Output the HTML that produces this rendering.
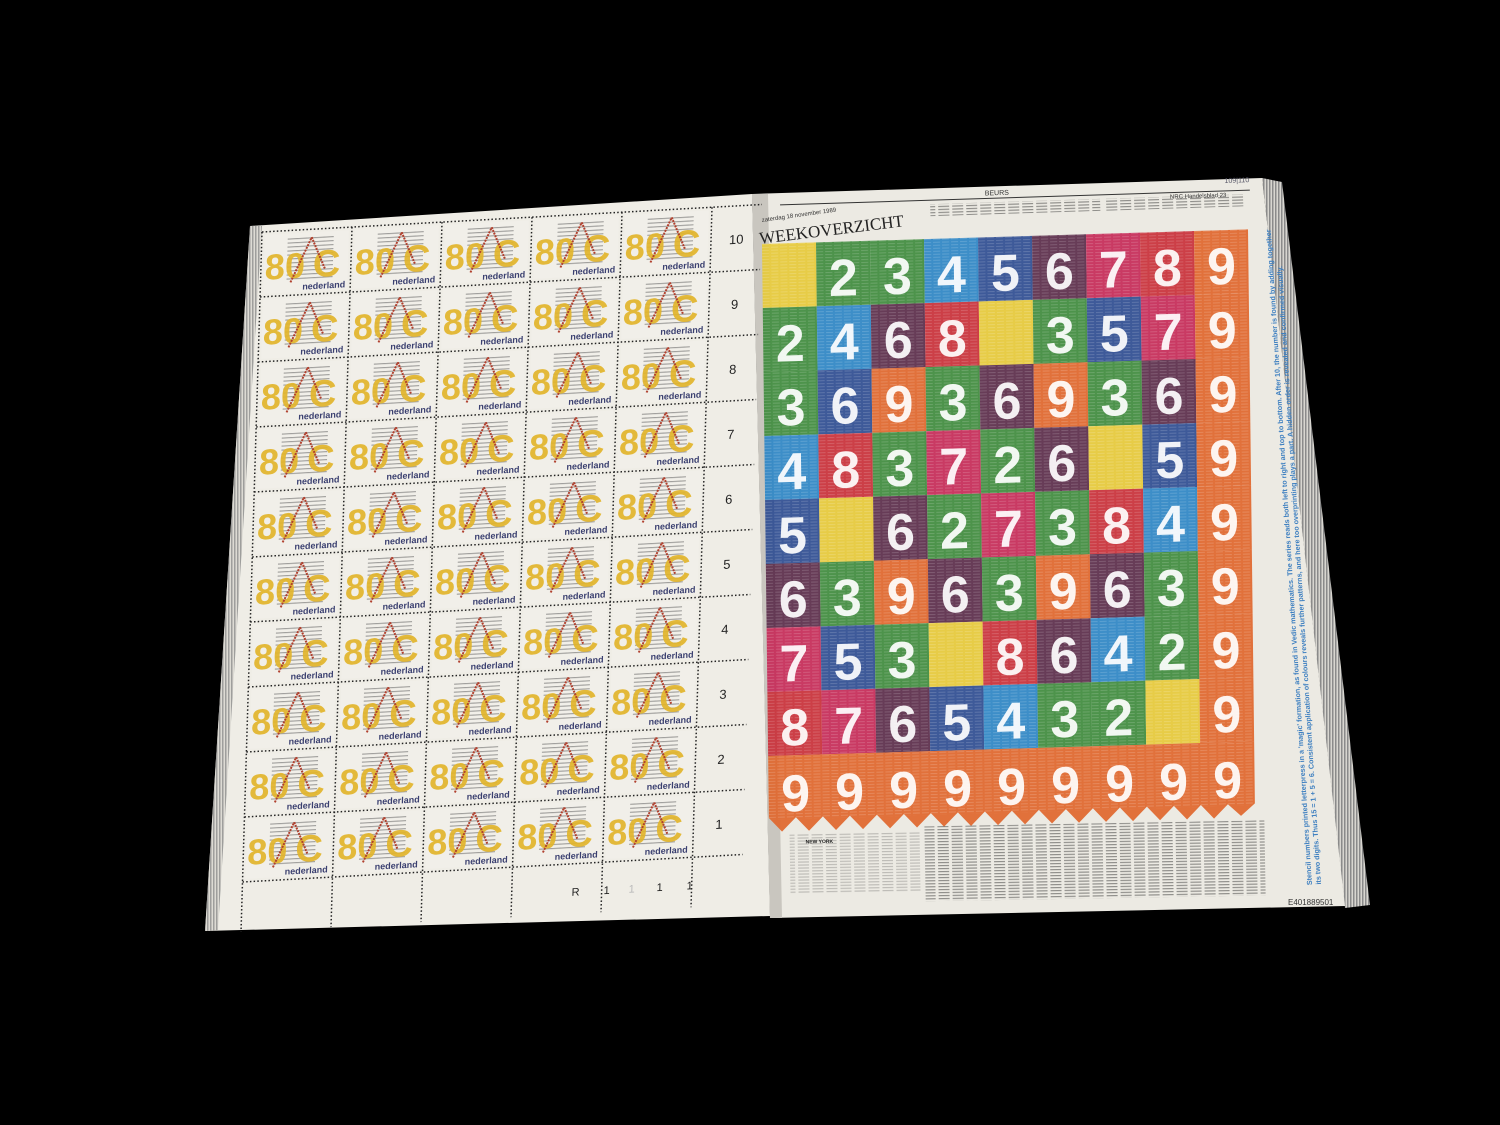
<!DOCTYPE html>
<html><head><meta charset="utf-8"><style>html,body{margin:0;padding:0;background:#000;}svg{display:block}</style></head>
<body>
<svg width="1500" height="1125" viewBox="0 0 1500 1125" xmlns="http://www.w3.org/2000/svg" font-family="Liberation Sans, sans-serif">
<defs>
<pattern id="ln" width="6" height="4" patternUnits="userSpaceOnUse"><rect width="6" height="1.1" fill="#666"/></pattern>
<pattern id="np" width="9" height="3" patternUnits="userSpaceOnUse"><rect width="7" height="1" fill="#fff" opacity="0.18"/></pattern>
<pattern id="np2" width="14" height="3" patternUnits="userSpaceOnUse"><rect width="11" height="1.2" fill="#333" opacity="0.5"/></pattern>
<pattern id="edge" width="3" height="4" patternUnits="userSpaceOnUse"><rect width="3" height="4" fill="#d8d6d0"/><rect width="1.5" height="4" fill="#8a8a8a"/></pattern>
<g id="st">
<rect x="3" y="3" width="84" height="59" fill="#f1efe9"/>
<rect x="26" y="7" width="46" height="44" fill="url(#ln)" opacity="0.6"/>
<text x="4" y="48" font-size="36" font-weight="bold" fill="#e2b52c" opacity="0.92">80</text>
<text x="52" y="48" font-size="38" font-weight="bold" fill="#e2b52c" opacity="0.92">C</text>
<line x1="30" y1="52" x2="50" y2="8" stroke="#b0402e" stroke-width="2" stroke-dasharray="2 1"/>
<line x1="50" y1="8" x2="64" y2="40" stroke="#b0402e" stroke-width="2" stroke-dasharray="2 1"/>
<text x="42" y="60" font-size="9" font-weight="bold" fill="#3b4070">nederland</text>
</g>
</defs>
<rect width="1500" height="1125" fill="#000"/>
<polygon points="1262,178 1282,182 1370,905 1345,908" fill="url(#edge)"/>
<polygon points="250,226 752,194 770,916 205,931" fill="#efede6"/>
<polygon points="250,226 262,226 218,930 205,931" fill="url(#edge)" opacity="0.8"/>
<polygon points="752,194 1262,178 1345,906 770,918" fill="#eceae3"/>
<polygon points="752,194 768,194 782,918 770,918" fill="#c9c6bf"/>
<g transform="matrix(1,-0.055,-0.03,1,262,232)">
<g stroke="#222" stroke-width="1.5" stroke-dasharray="1.5 2.2">
<line x1="0" y1="0" x2="0" y2="700"/><line x1="90" y1="0" x2="90" y2="700"/><line x1="180" y1="0" x2="180" y2="700"/><line x1="270" y1="0" x2="270" y2="700"/><line x1="360" y1="0" x2="360" y2="700"/><line x1="450" y1="0" x2="450" y2="700"/>
<line x1="0" y1="0" x2="500" y2="0"/><line x1="0" y1="65" x2="500" y2="65"/><line x1="0" y1="130" x2="500" y2="130"/><line x1="0" y1="195" x2="500" y2="195"/><line x1="0" y1="260" x2="500" y2="260"/><line x1="0" y1="325" x2="500" y2="325"/><line x1="0" y1="390" x2="500" y2="390"/><line x1="0" y1="455" x2="500" y2="455"/><line x1="0" y1="520" x2="500" y2="520"/><line x1="0" y1="585" x2="500" y2="585"/><line x1="0" y1="650" x2="500" y2="650"/>
</g>
<use href="#st" x="0" y="0"/><use href="#st" x="90" y="0"/><use href="#st" x="180" y="0"/><use href="#st" x="270" y="0"/><use href="#st" x="360" y="0"/>
<use href="#st" x="0" y="65"/><use href="#st" x="90" y="65"/><use href="#st" x="180" y="65"/><use href="#st" x="270" y="65"/><use href="#st" x="360" y="65"/>
<use href="#st" x="0" y="130"/><use href="#st" x="90" y="130"/><use href="#st" x="180" y="130"/><use href="#st" x="270" y="130"/><use href="#st" x="360" y="130"/>
<use href="#st" x="0" y="195"/><use href="#st" x="90" y="195"/><use href="#st" x="180" y="195"/><use href="#st" x="270" y="195"/><use href="#st" x="360" y="195"/>
<use href="#st" x="0" y="260"/><use href="#st" x="90" y="260"/><use href="#st" x="180" y="260"/><use href="#st" x="270" y="260"/><use href="#st" x="360" y="260"/>
<use href="#st" x="0" y="325"/><use href="#st" x="90" y="325"/><use href="#st" x="180" y="325"/><use href="#st" x="270" y="325"/><use href="#st" x="360" y="325"/>
<use href="#st" x="0" y="390"/><use href="#st" x="90" y="390"/><use href="#st" x="180" y="390"/><use href="#st" x="270" y="390"/><use href="#st" x="360" y="390"/>
<use href="#st" x="0" y="455"/><use href="#st" x="90" y="455"/><use href="#st" x="180" y="455"/><use href="#st" x="270" y="455"/><use href="#st" x="360" y="455"/>
<use href="#st" x="0" y="520"/><use href="#st" x="90" y="520"/><use href="#st" x="180" y="520"/><use href="#st" x="270" y="520"/><use href="#st" x="360" y="520"/>
<use href="#st" x="0" y="585"/><use href="#st" x="90" y="585"/><use href="#st" x="180" y="585"/><use href="#st" x="270" y="585"/><use href="#st" x="360" y="585"/>
<g font-size="13" fill="#222">
<text x="468" y="38">10</text><text x="472" y="103">9</text><text x="472" y="168">8</text><text x="472" y="233">7</text><text x="472" y="298">6</text><text x="472" y="363">5</text><text x="472" y="428">4</text><text x="472" y="493">3</text><text x="472" y="558">2</text><text x="472" y="623">1</text>
<text x="330" y="682" font-size="11">R</text><text x="362" y="682" font-size="11">1</text><text x="387" y="682" font-size="11" fill="#bbb">1</text><text x="415" y="682" font-size="11">1</text><text x="445" y="682" font-size="11">1</text>
</g>
</g>
<g transform="rotate(-1.8 1000 200)">
<line x1="780" y1="198" x2="1250" y2="198" stroke="#333" stroke-width="1"/>
<text x="985" y="195" font-size="7" fill="#333">BEURS</text>
<text x="1170" y="204" font-size="6" fill="#333">NRC Handelsblad 23</text>
<text x="1225" y="190" font-size="7" fill="#556">109|110</text>
<rect x="930" y="202" width="170" height="12" fill="url(#np2)"/>
<rect x="1105" y="202" width="140" height="12" fill="url(#np2)"/>
</g>
<text x="762" y="222" font-size="6" fill="#333" transform="rotate(-8 762 222)">zaterdag 18 november 1989</text>
<text x="760" y="244" font-size="17" font-family="Liberation Serif, serif" fill="#222" transform="rotate(-7 760 244)">WEEKOVERZICHT</text>
<g transform="matrix(1,-0.03,0.012,1,762,244)" font-size="52" font-weight="bold" text-anchor="middle" fill="#fff" fill-opacity="0.92">
<g>
<rect x="0" y="0" width="54" height="64" fill="#e6c93a"/><rect x="54" y="0" width="54" height="64" fill="#3f8b3e"/><rect x="108" y="0" width="54" height="64" fill="#3f8b3e"/><rect x="162" y="0" width="54" height="64" fill="#2e86c6"/><rect x="216" y="0" width="54" height="64" fill="#2f4d92"/><rect x="270" y="0" width="54" height="64" fill="#5b2d4b"/><rect x="324" y="0" width="54" height="64" fill="#c52a58"/><rect x="378" y="0" width="54" height="64" fill="#c9303a"/><rect x="432" y="0" width="54" height="64" fill="#e0662c"/>
<text x="81" y="54">2</text><text x="135" y="54">3</text><text x="189" y="54">4</text><text x="243" y="54">5</text><text x="297" y="54">6</text><text x="351" y="54">7</text><text x="405" y="54">8</text><text x="459" y="54">9</text>
</g>
<g transform="translate(0,64)">
<rect x="0" y="0" width="54" height="64" fill="#3f8b3e"/><rect x="54" y="0" width="54" height="64" fill="#2e86c6"/><rect x="108" y="0" width="54" height="64" fill="#5b2d4b"/><rect x="162" y="0" width="54" height="64" fill="#c9303a"/><rect x="216" y="0" width="54" height="64" fill="#e6c93a"/><rect x="270" y="0" width="54" height="64" fill="#3f8b3e"/><rect x="324" y="0" width="54" height="64" fill="#2f4d92"/><rect x="378" y="0" width="54" height="64" fill="#c52a58"/><rect x="432" y="0" width="54" height="64" fill="#e0662c"/>
<text x="27" y="54">2</text><text x="81" y="54">4</text><text x="135" y="54">6</text><text x="189" y="54">8</text><text x="297" y="54">3</text><text x="351" y="54">5</text><text x="405" y="54">7</text><text x="459" y="54">9</text>
</g>
<g transform="translate(0,128)">
<rect x="0" y="0" width="54" height="64" fill="#3f8b3e"/><rect x="54" y="0" width="54" height="64" fill="#2f4d92"/><rect x="108" y="0" width="54" height="64" fill="#e0662c"/><rect x="162" y="0" width="54" height="64" fill="#3f8b3e"/><rect x="216" y="0" width="54" height="64" fill="#5b2d4b"/><rect x="270" y="0" width="54" height="64" fill="#e0662c"/><rect x="324" y="0" width="54" height="64" fill="#3f8b3e"/><rect x="378" y="0" width="54" height="64" fill="#5b2d4b"/><rect x="432" y="0" width="54" height="64" fill="#e0662c"/>
<text x="27" y="54">3</text><text x="81" y="54">6</text><text x="135" y="54">9</text><text x="189" y="54">3</text><text x="243" y="54">6</text><text x="297" y="54">9</text><text x="351" y="54">3</text><text x="405" y="54">6</text><text x="459" y="54">9</text>
</g>
<g transform="translate(0,192)">
<rect x="0" y="0" width="54" height="64" fill="#2e86c6"/><rect x="54" y="0" width="54" height="64" fill="#c9303a"/><rect x="108" y="0" width="54" height="64" fill="#3f8b3e"/><rect x="162" y="0" width="54" height="64" fill="#c52a58"/><rect x="216" y="0" width="54" height="64" fill="#3f8b3e"/><rect x="270" y="0" width="54" height="64" fill="#5b2d4b"/><rect x="324" y="0" width="54" height="64" fill="#e6c93a"/><rect x="378" y="0" width="54" height="64" fill="#2f4d92"/><rect x="432" y="0" width="54" height="64" fill="#e0662c"/>
<text x="27" y="54">4</text><text x="81" y="54">8</text><text x="135" y="54">3</text><text x="189" y="54">7</text><text x="243" y="54">2</text><text x="297" y="54">6</text><text x="405" y="54">5</text><text x="459" y="54">9</text>
</g>
<g transform="translate(0,256)">
<rect x="0" y="0" width="54" height="64" fill="#2f4d92"/><rect x="54" y="0" width="54" height="64" fill="#e6c93a"/><rect x="108" y="0" width="54" height="64" fill="#5b2d4b"/><rect x="162" y="0" width="54" height="64" fill="#3f8b3e"/><rect x="216" y="0" width="54" height="64" fill="#c52a58"/><rect x="270" y="0" width="54" height="64" fill="#3f8b3e"/><rect x="324" y="0" width="54" height="64" fill="#c9303a"/><rect x="378" y="0" width="54" height="64" fill="#2e86c6"/><rect x="432" y="0" width="54" height="64" fill="#e0662c"/>
<text x="27" y="54">5</text><text x="135" y="54">6</text><text x="189" y="54">2</text><text x="243" y="54">7</text><text x="297" y="54">3</text><text x="351" y="54">8</text><text x="405" y="54">4</text><text x="459" y="54">9</text>
</g>
<g transform="translate(0,320)">
<rect x="0" y="0" width="54" height="64" fill="#5b2d4b"/><rect x="54" y="0" width="54" height="64" fill="#3f8b3e"/><rect x="108" y="0" width="54" height="64" fill="#e0662c"/><rect x="162" y="0" width="54" height="64" fill="#5b2d4b"/><rect x="216" y="0" width="54" height="64" fill="#3f8b3e"/><rect x="270" y="0" width="54" height="64" fill="#e0662c"/><rect x="324" y="0" width="54" height="64" fill="#5b2d4b"/><rect x="378" y="0" width="54" height="64" fill="#3f8b3e"/><rect x="432" y="0" width="54" height="64" fill="#e0662c"/>
<text x="27" y="54">6</text><text x="81" y="54">3</text><text x="135" y="54">9</text><text x="189" y="54">6</text><text x="243" y="54">3</text><text x="297" y="54">9</text><text x="351" y="54">6</text><text x="405" y="54">3</text><text x="459" y="54">9</text>
</g>
<g transform="translate(0,384)">
<rect x="0" y="0" width="54" height="64" fill="#c52a58"/><rect x="54" y="0" width="54" height="64" fill="#2f4d92"/><rect x="108" y="0" width="54" height="64" fill="#3f8b3e"/><rect x="162" y="0" width="54" height="64" fill="#e6c93a"/><rect x="216" y="0" width="54" height="64" fill="#c9303a"/><rect x="270" y="0" width="54" height="64" fill="#5b2d4b"/><rect x="324" y="0" width="54" height="64" fill="#2e86c6"/><rect x="378" y="0" width="54" height="64" fill="#3f8b3e"/><rect x="432" y="0" width="54" height="64" fill="#e0662c"/>
<text x="27" y="54">7</text><text x="81" y="54">5</text><text x="135" y="54">3</text><text x="243" y="54">8</text><text x="297" y="54">6</text><text x="351" y="54">4</text><text x="405" y="54">2</text><text x="459" y="54">9</text>
</g>
<g transform="translate(0,448)">
<rect x="0" y="0" width="54" height="64" fill="#c9303a"/><rect x="54" y="0" width="54" height="64" fill="#c52a58"/><rect x="108" y="0" width="54" height="64" fill="#5b2d4b"/><rect x="162" y="0" width="54" height="64" fill="#2f4d92"/><rect x="216" y="0" width="54" height="64" fill="#2e86c6"/><rect x="270" y="0" width="54" height="64" fill="#3f8b3e"/><rect x="324" y="0" width="54" height="64" fill="#3f8b3e"/><rect x="378" y="0" width="54" height="64" fill="#e6c93a"/><rect x="432" y="0" width="54" height="64" fill="#e0662c"/>
<text x="27" y="54">8</text><text x="81" y="54">7</text><text x="135" y="54">6</text><text x="189" y="54">5</text><text x="243" y="54">4</text><text x="297" y="54">3</text><text x="351" y="54">2</text><text x="459" y="54">9</text>
</g>
<g transform="translate(0,512)">
<path d="M0 0 H486 V62 L472 74 L459 62 L445 76 L432 62 L418 76 L405 62 L391 76 L378 62 L364 76 L351 62 L337 76 L324 62 L310 76 L297 62 L283 76 L270 62 L256 76 L243 62 L229 76 L216 62 L202 76 L189 62 L175 76 L162 62 L148 76 L135 62 L121 76 L108 62 L94 76 L81 62 L67 76 L54 62 L40 76 L27 62 L13 76 L0 62Z" fill="#e0662c"/>
<text x="27" y="56">9</text><text x="81" y="56">9</text><text x="135" y="56">9</text><text x="189" y="56">9</text><text x="243" y="56">9</text><text x="297" y="56">9</text><text x="351" y="56">9</text><text x="405" y="56">9</text><text x="459" y="56">9</text>
</g>
<rect x="0" y="0" width="486" height="576" fill="url(#np)"/>
</g>
<g transform="rotate(-1 1000 860)">
<rect x="790" y="830" width="130" height="60" fill="url(#np2)" opacity="0.5"/>
<rect x="925" y="825" width="340" height="75" fill="url(#np2)"/>
<text x="806" y="840" font-size="5" font-weight="bold" fill="#222">NEW YORK</text>
</g>
<g transform="translate(1312,885) rotate(-93.6)" font-size="7.2" font-weight="bold" fill="#3d7fc0">
<text x="0" y="0">Stencil numbers printed letterpress in a 'magic' formation, as found in Vedic mathematics. The series reads both left to right and top to bottom. After 10, the number is found by adding together</text>
<text x="0" y="9">its two digits. Thus 15 = 1 + 5 = 6. Consistent application of colours reveals further patterns, and here too overprinting plays a part. A hidden order is revealed and confirmed visually.</text>
</g>
<text x="1288" y="905" font-size="8" fill="#333">E401889501</text>
</svg>
</body></html>
